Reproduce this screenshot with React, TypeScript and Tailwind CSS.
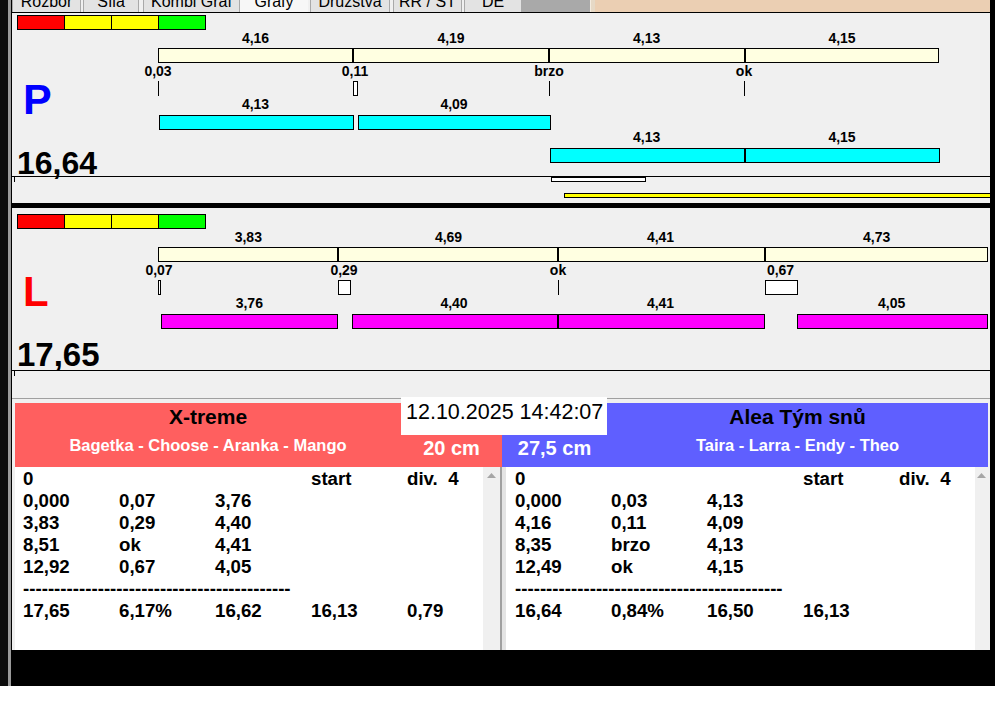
import React from "react";

type Box = { x: number; y: number; w: number; h: number; bg?: string; line?: boolean };
type Tag = { x: number; y: number; text: string };

const CREAM = "#ffffe1";

// ─── chart data (panel-relative px) ─────────────────────────────
const P_BOXES: Box[] = [
  { x: 146, y: 35, w: 195, h: 15, bg: CREAM },
  { x: 341, y: 35, w: 196, h: 15, bg: CREAM },
  { x: 537, y: 35, w: 196, h: 15, bg: CREAM },
  { x: 733, y: 35, w: 194, h: 15, bg: CREAM },
  { x: 146, y: 68, w: 1, h: 15, line: true },
  { x: 341, y: 68, w: 5, h: 15, bg: "#ffffff" },
  { x: 537, y: 68, w: 1, h: 15, line: true },
  { x: 732, y: 68, w: 1, h: 15, line: true },
  { x: 147, y: 102, w: 195, h: 15, bg: "#00ffff" },
  { x: 346, y: 102, w: 193, h: 15, bg: "#00ffff" },
  { x: 538, y: 135, w: 195, h: 15, bg: "#00ffff" },
  { x: 733, y: 135, w: 195, h: 15, bg: "#00ffff" },
  { x: 0, y: 163, w: 978, h: 1, line: true },
  { x: 2, y: 163, w: 1, h: 6, line: true },
  { x: 539, y: 164, w: 95, h: 5, bg: "#ffffff" },
  { x: 552, y: 180, w: 432, h: 5, bg: "#ffff00" },
];

const P_TAGS: Tag[] = [
  { x: 243.5, y: 17, text: "4,16" },
  { x: 439, y: 17, text: "4,19" },
  { x: 634.7, y: 17, text: "4,13" },
  { x: 830, y: 17, text: "4,15" },
  { x: 146, y: 50, text: "0,03" },
  { x: 343, y: 50, text: "0,11" },
  { x: 537, y: 50, text: "brzo" },
  { x: 732, y: 50, text: "ok" },
  { x: 243.5, y: 83, text: "4,13" },
  { x: 442, y: 83, text: "4,09" },
  { x: 634.6, y: 116, text: "4,13" },
  { x: 830, y: 116, text: "4,15" },
];

const L_BOXES: Box[] = [
  { x: 146, y: 39, w: 180, h: 15, bg: CREAM },
  { x: 326, y: 39, w: 220, h: 15, bg: CREAM },
  { x: 546, y: 39, w: 207, h: 15, bg: CREAM },
  { x: 753, y: 39, w: 223, h: 15, bg: CREAM },
  { x: 146, y: 72, w: 3, h: 15, bg: "#ffffff" },
  { x: 326, y: 72, w: 13, h: 15, bg: "#ffffff" },
  { x: 546, y: 72, w: 1, h: 15, line: true },
  { x: 753, y: 72, w: 33, h: 15, bg: "#ffffff" },
  { x: 149, y: 106, w: 177, h: 15, bg: "#ff00ff" },
  { x: 340, y: 106, w: 206, h: 15, bg: "#ff00ff" },
  { x: 546, y: 106, w: 207, h: 15, bg: "#ff00ff" },
  { x: 785, y: 106, w: 191, h: 15, bg: "#ff00ff" },
  { x: 0, y: 162, w: 978, h: 1, line: true },
  { x: 2, y: 162, w: 1, h: 6, line: true },
];

const L_TAGS: Tag[] = [
  { x: 236.3, y: 21, text: "3,83" },
  { x: 436.5, y: 21, text: "4,69" },
  { x: 648.5, y: 21, text: "4,41" },
  { x: 864.7, y: 21, text: "4,73" },
  { x: 147, y: 54, text: "0,07" },
  { x: 332, y: 54, text: "0,29" },
  { x: 546, y: 54, text: "ok" },
  { x: 768.5, y: 54, text: "0,67" },
  { x: 237.3, y: 87, text: "3,76" },
  { x: 442, y: 87, text: "4,40" },
  { x: 648.5, y: 87, text: "4,41" },
  { x: 879.7, y: 87, text: "4,05" },
];

const DASHES = "-".repeat(43);

const LEFT_ROWS = [
  ["0", "", "", "start", "div.  4"],
  ["0,000", "0,07", "3,76"],
  ["3,83", "0,29", "4,40"],
  ["8,51", "ok", "4,41"],
  ["12,92", "0,67", "4,05"],
  [DASHES],
  ["17,65", "6,17%", "16,62", "16,13", "0,79"],
];

const RIGHT_ROWS = [
  ["0", "", "", "start", "div.  4"],
  ["0,000", "0,03", "4,13"],
  ["4,16", "0,11", "4,09"],
  ["8,35", "brzo", "4,13"],
  ["12,49", "ok", "4,15"],
  [DASHES],
  ["16,64", "0,84%", "16,50", "16,13"],
];

const TABS = [
  { label: "Rozbor", w: 69, ml: 0 },
  { label: "Síla", w: 56, ml: 2 },
  { label: "Kombi Graf", w: 97, ml: 4 },
  { label: "Grafy", w: 68, ml: 0, active: true },
  { label: "Družstva", w: 80, ml: 2 },
  { label: "RR / ST", w: 69, ml: 3 },
  { label: "DE", w: 58, ml: 2 },
];

// ─── pieces ─────────────────────────────────────────────────────
function ColorBar({ top }: { top: string }) {
  return (
    <div className={`absolute left-[5px] flex ${top}`}>
      <div className="w-[48px] h-[15px] border border-black bg-[#ff0000]" />
      <div className="w-[48px] h-[15px] border border-black bg-[#ffff00] -ml-px" />
      <div className="w-[48px] h-[15px] border border-black bg-[#ffff00] -ml-px" />
      <div className="w-[48px] h-[15px] border border-black bg-[#00ff00] -ml-px" />
    </div>
  );
}

function Chart({ boxes, tags }: { boxes: Box[]; tags: Tag[] }) {
  return (
    <>
      {boxes.map((b, i) => (
        <div
          key={i}
          className={b.line ? "absolute bg-black" : "absolute border border-black"}
          style={{ left: b.x, top: b.y, width: b.w, height: b.h, backgroundColor: b.line ? undefined : b.bg }}
        />
      ))}
      {tags.map((t, i) => (
        <div
          key={i}
          className="absolute -translate-x-1/2 text-[14px] font-bold leading-[16px] whitespace-nowrap text-black"
          style={{ left: t.x, top: t.y }}
        >
          {t.text}
        </div>
      ))}
    </>
  );
}

function ScrollArrow() {
  return (
    <svg width="9" height="5" viewBox="0 0 9 5" className="mx-auto mt-[6px]">
      <polygon points="0,5 4.5,0 9,5" fill="#a6a6a6" />
    </svg>
  );
}

function Rows({ rows }: { rows: string[][] }) {
  return (
    <div className="text-[18.7px] font-bold leading-[22px] text-black">
      {rows.map((r, i) =>
        r.length === 1 ? (
          <div key={i} className="whitespace-pre">{r[0]}</div>
        ) : (
          <div key={i} className="flex">
            {r.map((c, j) => (
              <span key={j} className="w-[96px] shrink-0 whitespace-pre">
                {c}
              </span>
            ))}
          </div>
        )
      )}
    </div>
  );
}

export default function App() {
  return (
    <div className="w-[995px] h-[716px] bg-white overflow-hidden font-['Liberation_Sans',Arial,sans-serif]">
      <div className="h-[686px] bg-black flex">
        {/* left window edge */}
        <div className="w-[12px] flex shrink-0">
          <div className="w-[8px] bg-[#0c0c0c]" />
          <div className="w-[3px] bg-[#9a9a9a]" />
          <div className="w-[1px] bg-black" />
        </div>

        <div className="w-[978px] shrink-0 flex flex-col">
          {/* ── tab strip (cut off at top) ── */}
          <div className="h-[12px] flex bg-[#f0f0f0] overflow-hidden">
            {TABS.map((t) => (
              <div
                key={t.label}
                className={
                  t.active
                    ? "h-[12px] overflow-hidden flex justify-center bg-[#f7f7f7]"
                    : "h-[12px] overflow-hidden flex justify-center bg-[#e3e3e3] border-x border-[#a9a9a9]"
                }
                style={{ width: t.w, marginLeft: t.ml }}
              >
                <span className="text-[16px] leading-[16px] -mt-[6px] text-black whitespace-nowrap">{t.label}</span>
              </div>
            ))}
            <div className="w-[68px] bg-[#a9a9a9]" />
            <div className="w-[5px] bg-[#e6d9c6] border-l border-[#f4ece0]" />
            <div className="flex-1 bg-[#ebcfb3]" />
          </div>

          {/* ══════ P lane ══════ */}
          <div className="relative h-[191px] border-t border-black bg-[#f0f0f0] overflow-hidden">
            <ColorBar top="top-[2px]" />
            <div className="absolute left-[11px] top-[65px] text-[43px] font-bold leading-none text-[#0000ff]">P</div>
            <div className="absolute left-[5px] top-[134px] text-[32px] font-bold leading-none text-black">16,64</div>
            <Chart boxes={P_BOXES} tags={P_TAGS} />
          </div>

          <div className="h-[5px] bg-black" />

          {/* ══════ L lane ══════ */}
          <div className="relative h-[190px] bg-[#f0f0f0] overflow-hidden">
            <ColorBar top="top-[6px]" />
            <div className="absolute left-[11px] top-[63px] text-[42px] font-bold leading-none text-[#ff0000]">L</div>
            <div className="absolute left-[5px] top-[130px] text-[33px] font-bold leading-none text-black">17,65</div>
            <Chart boxes={L_BOXES} tags={L_TAGS} />
          </div>

          {/* ══════ teams ══════ */}
          <div className="relative h-[252px] bg-[#f0f0f0] border-t border-[#a0a0a0] pt-[4px] pl-[3px] flex">
            {/* X-treme */}
            <div className="w-[487px] flex flex-col">
              <div className="h-[64px] bg-[#ff5f5f] flex">
                <div className="w-[386px] flex flex-col items-center pt-[2px]">
                  <div className="text-[21px] font-bold leading-[24px] text-black">X-treme</div>
                  <div className="mt-[6px] text-[16.5px] font-bold leading-[20px] text-white">Bagetka - Choose - Aranka - Mango</div>
                </div>
                <div className="flex-1 flex justify-center pt-[33px] text-[20px] font-bold leading-[24px] text-white">20 cm</div>
              </div>
              <div className="h-[183px] flex">
                <div className="w-[468px] bg-white pl-[8px] pt-[1px]">
                  <Rows rows={LEFT_ROWS} />
                </div>
                <div className="w-[17px] bg-[#f0f0f0]">
                  <ScrollArrow />
                </div>
                <div className="w-[2px] bg-[#a0a0a0]" />
              </div>
            </div>

            {/* Alea Tým snů */}
            <div className="w-[486px] flex flex-col">
              <div className="h-[64px] bg-[#5f5fff] flex">
                <div className="w-[105px] flex justify-center pt-[33px] text-[20px] font-bold leading-[24px] text-white">27,5 cm</div>
                <div className="flex-1 flex flex-col items-center pt-[2px]">
                  <div className="text-[21px] font-bold leading-[24px] text-black">Alea Tým snů</div>
                  <div className="mt-[6px] text-[16.5px] font-bold leading-[20px] text-white">Taira - Larra - Endy - Theo</div>
                </div>
              </div>
              <div className="h-[183px] flex rounded-br-[6px] overflow-hidden">
                <div className="w-[473px] bg-white border-l-[4px] border-[#e4e4e4] pl-[9px] pt-[1px]">
                  <Rows rows={RIGHT_ROWS} />
                </div>
                <div className="w-[13px] bg-[#f0f0f0]">
                  <ScrollArrow />
                </div>
              </div>
            </div>

            {/* timestamp box over the headers */}
            <div className="absolute left-[389px] top-[-2px] w-[206px] h-[38px] bg-white pl-[5px] pt-[3px] text-[21.5px] leading-[24px] text-black whitespace-nowrap">
              12.10.2025 14:42:07
            </div>
          </div>
        </div>

        <div className="w-[5px] bg-black" />
      </div>
    </div>
  );
}
